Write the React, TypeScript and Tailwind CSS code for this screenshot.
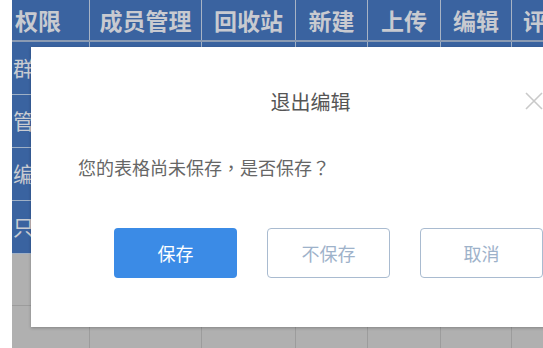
const columns = [
  { label: '权限', w: 'w-[78px]', align: 'justify-start pl-[3px]' },
  { label: '成员管理', w: 'w-[112px]', align: 'justify-center' },
  { label: '回收站', w: 'w-[94px]', align: 'justify-center' },
  { label: '新建', w: 'w-[72px]', align: 'justify-center' },
  { label: '上传', w: 'w-[73px]', align: 'justify-center' },
  { label: '编辑', w: 'w-[71px]', align: 'justify-center' },
  { label: '评论', w: 'w-[78px]', align: 'justify-start pl-[11px]' },
];

const roles = ['群主', '管理员', '编辑者', '只读'];

function BlueRow({ label }: { label: string }) {
  return (
    <div className="flex h-[53px] border-b border-[#9fb0c6]">
      {columns.map((c, i) => (
        <div
          key={c.label}
          className={`${c.w} flex items-center pl-[1px] shrink-0 ${i < columns.length - 1 ? 'border-r border-[#9fb0c6]' : ''}`}
        >
          {i === 0 && <span className="text-[21px] text-[#c9ccd2] whitespace-nowrap">{label}</span>}
        </div>
      ))}
    </div>
  );
}

function GrayRow() {
  return (
    <div className="flex h-[52px] border-b border-[#9c9c9c]">
      {columns.map((c, i) => (
        <div
          key={c.label}
          className={`${c.w} shrink-0 ${i < columns.length - 1 ? 'border-r border-[#9c9c9c]' : ''}`}
        />
      ))}
    </div>
  );
}

export default function App() {
  return (
    <div
      className="relative w-[543px] h-[348px] overflow-hidden bg-white"
      style={{ fontFamily: '"Noto Sans CJK SC", "Microsoft YaHei", sans-serif' }}
    >
      {/* table behind the dialog */}
      <div className="ml-[12px] flex flex-col">
        <div className="flex h-[42px] bg-[#3a63a0] border-b-2 border-[#8b9bb3]">
          {columns.map((c, i) => (
            <div
              key={c.label}
              className={`${c.w} ${c.align} shrink-0 flex items-center ${i < columns.length - 1 ? 'border-r border-[#a7b3c5]' : ''}`}
            >
              <span className="text-[23px] font-bold text-[#c8cad0] leading-none whitespace-nowrap">{c.label}</span>
            </div>
          ))}
        </div>
        <div className="bg-[#3a63a0]">
          {roles.map((r) => (
            <BlueRow key={r} label={r} />
          ))}
        </div>
        <div className="bg-[#b0b0b0]">
          <GrayRow />
          <GrayRow />
        </div>
      </div>

      {/* dialog */}
      <div className="absolute left-[31px] top-[47px] w-[559px] h-[280px] bg-white shadow-[0_1px_3px_rgba(0,0,0,0.25)] flex flex-col">
        <div className="pt-[41px] text-center text-[20px] leading-[28px] text-[#555]">退出编辑</div>
        <button className="absolute left-[494px] top-[45px] w-[18px] h-[18px] text-[#c9c9c9]">
          <svg viewBox="0 0 18 18" className="w-[18px] h-[18px]" fill="none" stroke="currentColor" strokeWidth={1.6}>
            <path d="M1 1L17 17M17 1L1 17" />
          </svg>
        </button>
        <div
          className="mt-[38px] pl-[47px] text-[18px] leading-[26px] text-[#666]"
          style={{ fontFamily: '"Noto Sans CJK TC", "Noto Sans CJK SC", sans-serif' }}
        >
          您的表格尚未保存，是否保存？
        </div>
        <div className="mt-[48px] pl-[83px] flex gap-[30px]">
          <button className="w-[123px] h-[50px] rounded-[4px] bg-[#3b8be6] text-white text-[18px]">保存</button>
          <button className="w-[123px] h-[50px] rounded-[4px] border border-[#a9bbd0] bg-white text-[#9eb2ca] text-[18px]">
            不保存
          </button>
          <button className="w-[123px] h-[50px] rounded-[4px] border border-[#a9bbd0] bg-white text-[#9eb2ca] text-[18px]">
            取消
          </button>
        </div>
      </div>
    </div>
  );
}
